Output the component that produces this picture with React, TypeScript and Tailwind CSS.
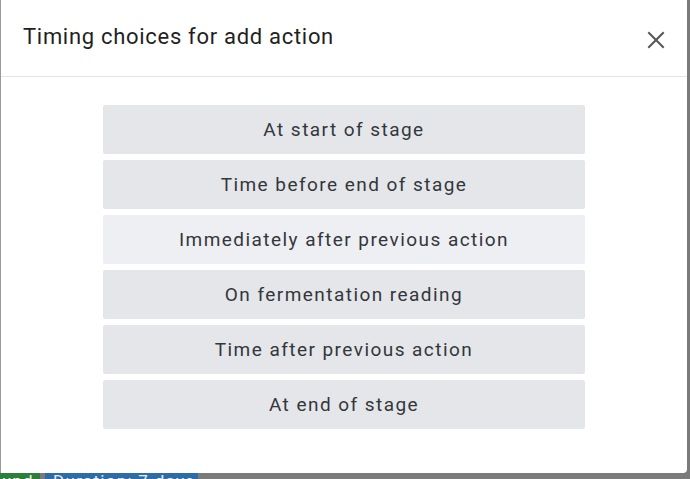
import React from "react";

const options = [
  { label: "At start of stage", hover: false },
  { label: "Time before end of stage", hover: false },
  { label: "Immediately after previous action", hover: true },
  { label: "On fermentation reading", hover: false },
  { label: "Time after previous action", hover: false },
  { label: "At end of stage", hover: false },
];

export default function App() {
  return (
    <div className="relative w-[690px] h-[479px] overflow-hidden bg-[#7a7a7a] font-['Roboto',sans-serif]">
      {/* background page peeking below */}
      <div className="absolute left-0 top-[471px] flex items-start gap-[5px]">
        <div className="w-[40px] overflow-hidden bg-[#2f7d3b] text-[#e8f2e8] text-[17px] leading-[20px] tracking-[1px] pl-[2px]">upd</div>
        <div className="w-[153px] bg-[#2f6ca6] text-[#e6eef6] text-[17px] leading-[20px] px-[8px] tracking-[1.3px] whitespace-nowrap">Duration: 7 days</div>
      </div>

      {/* dialog */}
      <div className="absolute left-0 top-0 w-[687px] h-[473px] bg-white border-l border-[#9a9a9a] rounded-br-[4px] flex flex-col">
        <div className="h-[77px] shrink-0 flex items-center justify-between pl-[22px] pr-[22px] border-b border-[#e4e4e4]">
          <h1 className="text-[22px] text-[#1f1f1f] tracking-[0.7px] font-normal mt-[-3px]">
            Timing choices for add action
          </h1>
          <svg width="18" height="18" viewBox="0 0 18 18" className="mt-[3px]">
            <path d="M2 2 L16 16 M16 2 L2 16" stroke="#555" strokeWidth="2" strokeLinecap="square" />
          </svg>
        </div>
        <div className="flex flex-col items-center gap-[6px] pt-[28px]">
          {options.map((o) => (
            <button
              key={o.label}
              className={`w-[482px] h-[49px] pt-[2px] rounded-[2px] text-[19px] tracking-[1.45px] text-[#33363b] ${
                o.hover ? "bg-[#eeeff2]" : "bg-[#e5e6ea]"
              }`}
            >
              {o.label}
            </button>
          ))}
        </div>
      </div>
    </div>
  );
}
